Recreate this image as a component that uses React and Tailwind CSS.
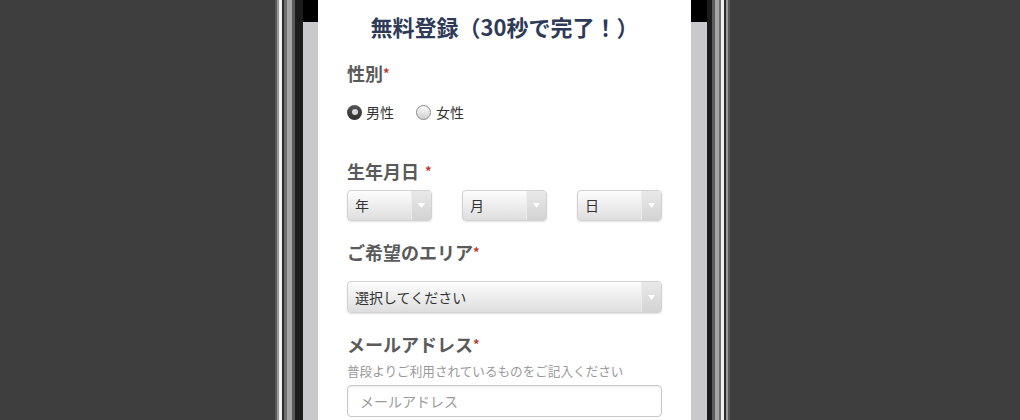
import React from "react";

const jp = "font-['Noto_Sans_CJK_JP','Noto_Sans',sans-serif]";

function Req({ space }) {
    return <span className={`text-[#c0392b] text-[13px] align-top ${space ? "ml-[6px]" : ""}`}>*</span>;
}

function SelectBox({ label, className }) {
    return (
        <div className={`flex h-[31px] rounded-[4px] border border-[#d2d2d2] bg-gradient-to-b from-[#fdfdfd] to-[#dedede] shadow-[0_1px_2px_rgba(0,0,0,0.12)] overflow-hidden ${className}`}>
            <div className="flex-1 flex items-center pl-[7px] text-[14px] text-[#333]">{label}</div>
            <div className="w-[20px] flex items-center justify-center bg-gradient-to-b from-[#e9e9e9] to-[#d3d3d3] border-l border-[#ececec]">
                <svg width="7" height="5" viewBox="0 0 7 5">
                    <path d="M0 0 L7 0 L3.5 5 Z" fill="#fff" />
                </svg>
            </div>
        </div>
    );
}

export default function App() {
    return (
        <div className={`w-[1020px] h-[420px] overflow-hidden bg-[#3e3e3e] flex ${jp}`}>
            <div className="w-[275px]" />

            {/* left bezel */}
            <div className="flex h-full">
                <div className="w-[2px] bg-[#5a5a5a]" />
                <div className="w-[2px] bg-[#9a9a9a]" />
                <div className="w-[3px] bg-[#f0f0f0]" />
                <div className="w-[2px] bg-[#2a2a2a]" />
                <div className="w-[3px] bg-[#6e6e6e]" />
                <div className="w-[5px] bg-[#a5a5a5]" />
                <div className="w-[3px] bg-[#5c5c5c]" />
                <div className="w-[8px] bg-[#1c1c1c]" />
            </div>

            {/* screen */}
            <div className="flex h-full">
                <div className="w-[15px] flex flex-col">
                    <div className="h-[22px] bg-black" />
                    <div className="flex-1 bg-[#c9c9cd]" />
                </div>

                <div className="w-[373px] bg-white px-[29px] text-[#5a5a5a]">
                    <h1 className="pt-[10px] text-center text-[22px] leading-[32px] font-bold text-[#2e3a58]">
                        無料登録（30秒で完了！）
                    </h1>

                    <div className="mt-[18px] text-[18px] leading-[26px] font-bold">
                        性別<Req />
                    </div>

                    <div className="mt-[16px] h-[20px] flex items-center text-[14px] text-[#333]">
                        <div className="w-[15px] h-[15px] rounded-full bg-gradient-to-b from-[#555] to-[#2e2e2e] flex items-center justify-center">
                            <div className="w-[6px] h-[6px] rounded-full bg-[#d8d8d8]" />
                        </div>
                        <span className="ml-[4px]">男性</span>
                        <div className="ml-[22px] w-[15px] h-[15px] rounded-full border border-[#8a8a8a] bg-gradient-to-b from-[#fdfdfd] to-[#cfcfcf]" />
                        <span className="ml-[5px]">女性</span>
                    </div>

                    <div className="mt-[36px] text-[18px] leading-[26px] font-bold">
                        生年月日<Req space />
                    </div>

                    <div className="mt-[6px] grid grid-cols-3 gap-x-[30px]">
                        <SelectBox label="年" />
                        <SelectBox label="月" />
                        <SelectBox label="日" />
                    </div>

                    <div className="mt-[18px] text-[18px] leading-[26px] font-bold">
                        ご希望のエリア<Req />
                    </div>

                    <SelectBox label="選択してください" className="mt-[16px] h-[32px]" />

                    <div className="mt-[18px] text-[18px] leading-[26px] font-bold">
                        メールアドレス<Req />
                    </div>

                    <div className="mt-[5px] text-[12.6px] leading-[18px] text-[#9a9a9a]">
                        普段よりご利用されているものをご記入ください
                    </div>

                    <div className="mt-[5px] h-[32px] rounded-[4px] border border-[#c8c8c8] flex items-center pl-[12px] text-[14px] text-[#9a9a9a] shadow-[inset_0_1px_2px_rgba(0,0,0,0.08)]">
                        メールアドレス
                    </div>
                </div>

                <div className="w-[16px] flex flex-col">
                    <div className="h-[22px] bg-black" />
                    <div className="flex-1 bg-[#c9c9cd]" />
                </div>
            </div>

            {/* right bezel */}
            <div className="flex h-full">
                <div className="w-[5px] bg-[#1c1c1c]" />
                <div className="w-[3px] bg-[#5c5c5c]" />
                <div className="w-[4px] bg-[#a5a5a5]" />
                <div className="w-[2px] bg-[#6e6e6e]" />
                <div className="w-[3px] bg-[#f0f0f0]" />
                <div className="w-[2px] bg-[#2a2a2a]" />
                <div className="w-[2px] bg-[#9a9a9a]" />
                <div className="w-[2px] bg-[#5a5a5a]" />
            </div>
        </div>
    );
}
